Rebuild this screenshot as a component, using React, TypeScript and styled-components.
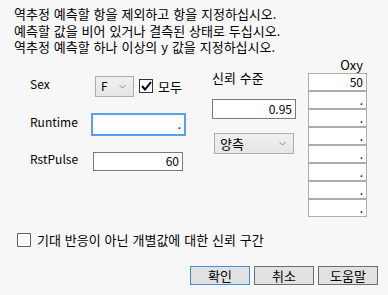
import styled, { createGlobalStyle } from 'styled-components';

const GlobalStyle = createGlobalStyle`
    html, body {
        margin : 0;
        padding : 0;
        background : #f7f7f7;
    }
    * {
        box-sizing : border-box;
    }
`

const FONT = `"Noto Sans CJK KR", "Noto Sans", sans-serif`

const oxyRows = ['50', '.', '.', '.', '.', '.', '.', '.']

const Chevron = () => (
    <svg width="7" height="5" viewBox="0 0 7 5">
        <path d="M0.5 1 L3.5 4 L6.5 1" fill="none" stroke="#8a8a8a" strokeWidth="1" />
    </svg>
)

const App = () => {
    return (
        <>
            <GlobalStyle />
            <Dialog>
                <Instructions>
                    <Line>역추정 예측할 항을 제외하고 항을 지정하십시오.</Line>
                    <Line>예측할 값을 비어 있거나 결측된 상태로 두십시오.</Line>
                    <Line>역추정 예측할 하나 이상의 y 값을 지정하십시오.</Line>
                </Instructions>

                <Body>
                    <LeftColumn>
                        <FieldRow>
                            <Label>Sex</Label>
                            <Combo $width={39} $indent={4}>
                                <Latin>F</Latin>
                                <Chevron />
                            </Combo>
                            <Check $checked>
                                <svg width="11" height="10" viewBox="0 0 11 10">
                                    <path d="M1 5 L4 8.5 L10 1" fill="none" stroke="#000" strokeWidth="2" />
                                </svg>
                            </Check>
                            <CheckLabel>모두</CheckLabel>
                        </FieldRow>
                        <FieldRow>
                            <Label>Runtime</Label>
                            <NumBox $width={95} $height={23} $focus>.</NumBox>
                        </FieldRow>
                        <FieldRow>
                            <Label>RstPulse</Label>
                            <NumBox $width={90} $height={19} $indent={2}>60</NumBox>
                        </FieldRow>
                    </LeftColumn>

                    <MiddleColumn>
                        <Heading>신뢰 수준</Heading>
                        <NumBox $width={84} $height={20}>0.95</NumBox>
                        <Combo $width={80} $indent={2}>
                            <span>양측</span>
                            <Chevron />
                        </Combo>
                    </MiddleColumn>

                    <OxyColumn>
                        <OxyHeader>Oxy</OxyHeader>
                        {oxyRows.map((v, i) => (
                            <OxyCell key={i}>{v}</OxyCell>
                        ))}
                    </OxyColumn>
                </Body>

                <OptionRow>
                    <Check />
                    <span>기대 반응이 아닌 개별값에 대한 신뢰 구간</span>
                </OptionRow>

                <Buttons>
                    <Button $primary>확인</Button>
                    <Button>취소</Button>
                    <Button>도움말</Button>
                </Buttons>
            </Dialog>
        </>
    )
}

export default App;

const Dialog = styled.div`
    width : 388px;
    height : 295px;
    background : #f7f7f7;
    padding : 6px 10px 0 14px;
    font-family : ${FONT};
    font-size : 13px;
    color : #000;
    overflow : hidden;
`

const Instructions = styled.div`
    white-space : nowrap;
    word-spacing : 1px;
`

const Line = styled.div`
    height : 16.5px;
    line-height : 16.5px;
`

const Body = styled.div`
    display : flex;
    align-items : flex-start;
    margin-top : 4px;
`

const LeftColumn = styled.div`
    width : 182px;
    margin-left : 16px;
    padding-top : 16px;
    display : flex;
    flex-direction : column;
    gap : 16px;
`

const FieldRow = styled.div`
    display : flex;
    align-items : center;
`

const Label = styled.div`
    width : 61px;
    font-size : 12px;
    line-height : 16px;
    white-space : nowrap;
    margin-top : -4px;
`

const Latin = styled.span`
    font-size : 12px;
`

const Heading = styled.div`
    line-height : 16px;
    word-spacing : 1px;
    margin-bottom : 13px;
`

const Combo = styled.div<{ $width: number; $indent?: number }>`
    width : ${({ $width }) => $width}px;
    height : 21px;
    margin-left : ${({ $indent }) => $indent || 0}px;
    border : 1px solid #adadad;
    background : linear-gradient(#f0f0f0, #e5e5e5);
    display : flex;
    align-items : center;
    justify-content : space-between;
    padding : 0 7px 0 5px;
    line-height : 1;
`

const Check = styled.div<{ $checked?: boolean }>`
    width : 14px;
    height : 14px;
    border : 1px solid #333;
    background : #fff;
    display : flex;
    align-items : center;
    justify-content : center;
    margin-left : ${({ $checked }) => ($checked ? '5px' : '3px')};
    flex-shrink : 0;
`

const CheckLabel = styled.span`
    margin-left : 5px;
`

const NumBox = styled.div<{ $width: number; $height: number; $indent?: number; $focus?: boolean }>`
    width : ${({ $width }) => $width}px;
    height : ${({ $height }) => $height}px;
    margin-left : ${({ $indent }) => $indent || 0}px;
    border : ${({ $focus }) => ($focus ? '2px solid #5ba1e9' : '1px solid #7a7a7a')};
    background : #fff;
    display : flex;
    align-items : center;
    justify-content : flex-end;
    padding-right : 3px;
    font-size : 12px;
    line-height : 1;
`

const MiddleColumn = styled.div`
    width : 96px;
    padding-top : 10px;
    display : flex;
    flex-direction : column;
    align-items : flex-start;
    & > ${Combo} {
        margin-top : 14px;
    }
`

const OxyColumn = styled.div`
    width : 59px;
    display : flex;
    flex-direction : column;
`

const OxyHeader = styled.div`
    text-align : right;
    font-size : 13px;
    line-height : 14px;
    margin-top : -2px;
    margin-bottom : 1px;
    padding-right : 4px;
`

const OxyCell = styled.div`
    height : 18px;
    border : 1px solid #adadad;
    background : #fff;
    text-align : right;
    padding-right : 3px;
    font-size : 12px;
    line-height : 16px;
`

const OptionRow = styled.div`
    display : flex;
    align-items : center;
    gap : 6px;
    margin-top : 15px;
    line-height : 16px;
    word-spacing : 1px;
    & > ${Check} {
        margin-left : 3px;
        border-color : #666;
    }
`

const Buttons = styled.div`
    display : flex;
    justify-content : flex-end;
    gap : 4px;
    margin-top : 18px;
`

const Button = styled.button<{ $primary?: boolean }>`
    width : 60px;
    height : 19px;
    padding : 0;
    font-family : ${FONT};
    font-size : 13px;
    line-height : 1;
    color : #000;
    background : #e1e1e1;
    border : 1px solid ${({ $primary }) => ($primary ? '#3c8ee8' : '#6e6e6e')};
`
